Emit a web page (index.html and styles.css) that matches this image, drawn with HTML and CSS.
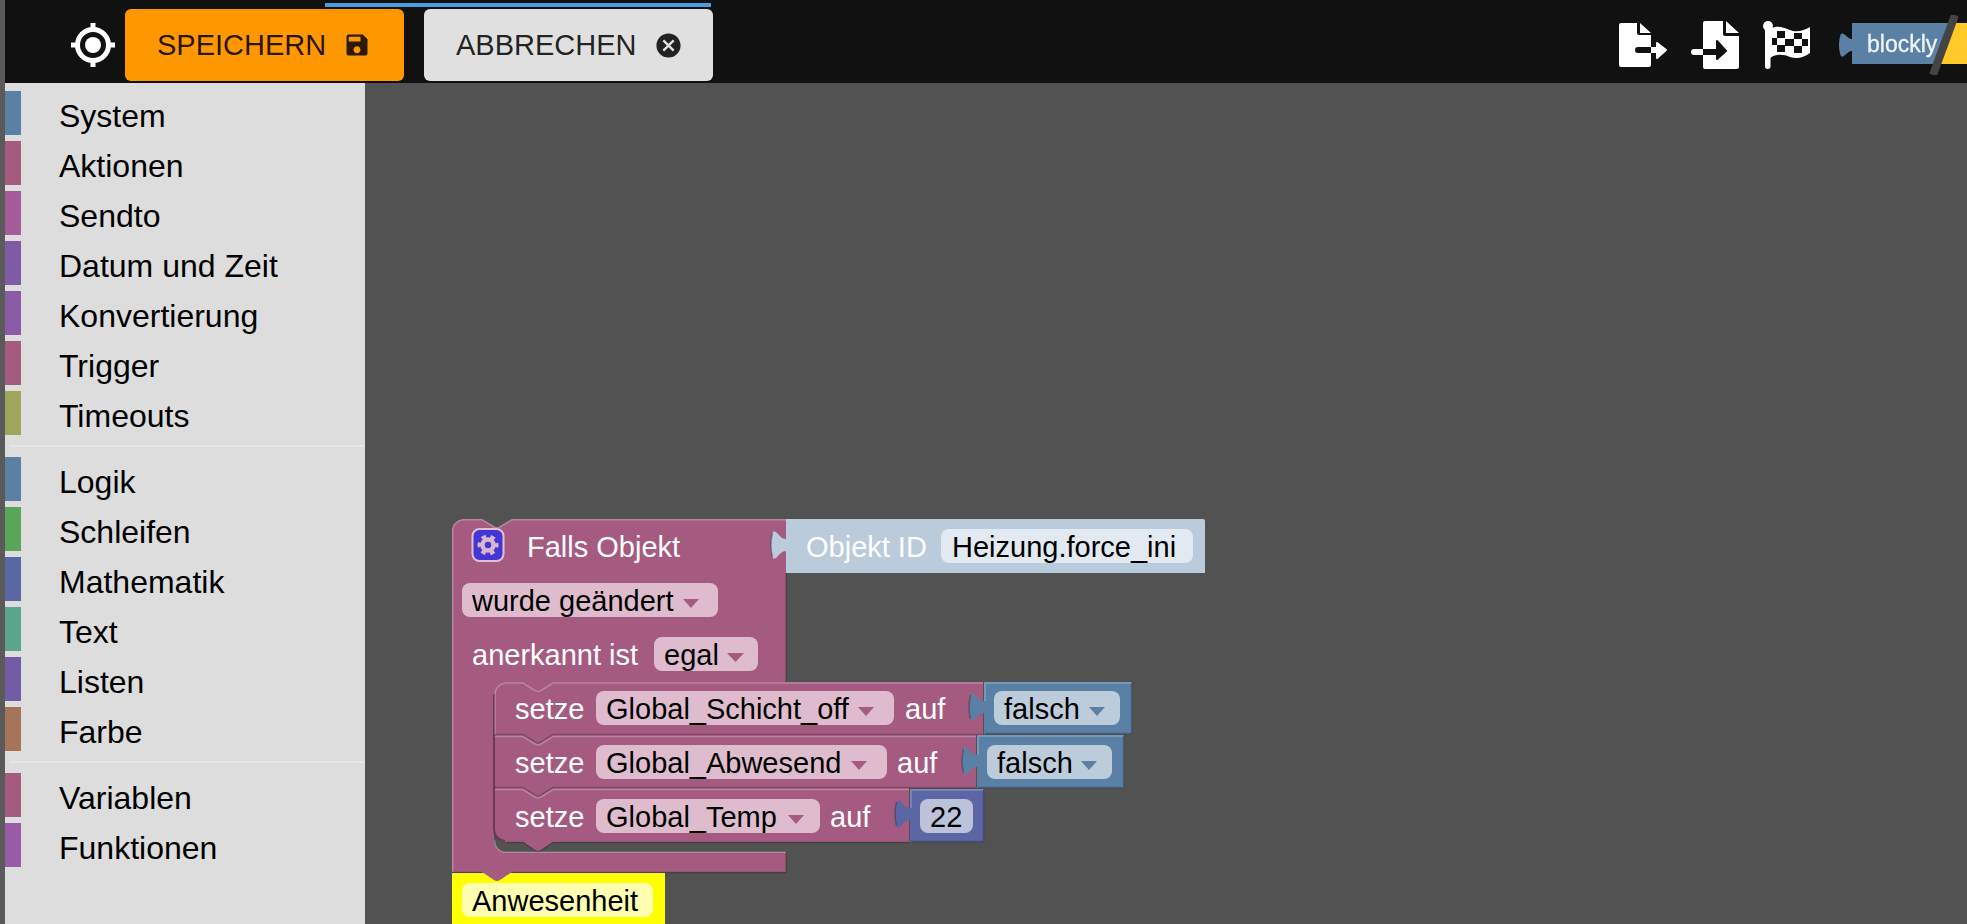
FILE: index.html
```html
<!DOCTYPE html>
<html lang="de">
<head>
<meta charset="utf-8">
<title>Blockly</title>
<link rel="stylesheet" href="styles.css">
</head>
<body>
<div class="app">
  <header class="topbar">
    <div class="progress"></div>
    <svg class="target" width="44" height="44" viewBox="0 0 44 44">
      <circle cx="22" cy="22" r="15.5" fill="none" stroke="#fff" stroke-width="5"/>
      <circle cx="22" cy="22" r="8" fill="#fff"/>
      <rect x="19.5" y="0" width="5" height="8" fill="#fff"/>
      <rect x="19.5" y="36" width="5" height="8" fill="#fff"/>
      <rect x="0" y="19.5" width="8" height="5" fill="#fff"/>
      <rect x="36" y="19.5" width="8" height="5" fill="#fff"/>
    </svg>
    <button class="btn btn-save">SPEICHERN
      <svg width="28" height="28" viewBox="0 0 24 24"><path fill="#2b1a00" d="M17 3H5c-1.11 0-2 .9-2 2v14c0 1.1.89 2 2 2h14c1.1 0 2-.9 2-2V7l-4-4zm-5 16c-1.66 0-3-1.34-3-3s1.34-3 3-3 3 1.34 3 3-1.34 3-3 3zm3-10H5V5h10v4z"/></svg>
    </button>
    <button class="btn btn-cancel">ABBRECHEN
      <svg width="29" height="29" viewBox="0 0 24 24"><path fill="#222" d="M12 2C6.47 2 2 6.47 2 12s4.47 10 10 10 10-4.47 10-10S17.53 2 12 2zm5 13.59L15.59 17 12 13.41 8.41 17 7 15.59 10.59 12 7 8.41 8.41 7 12 10.59 15.59 7 17 8.41 13.41 12 17 15.59z"/></svg>
    </button>
    <div class="tools">
      <svg width="48" height="44" viewBox="0 0 48 44">
        <path fill="#fff" d="M2 0H18V10a2 2 0 0 0 2 2H32V42a2 2 0 0 1-2 2H2a2 2 0 0 1-2-2V2a2 2 0 0 1 2-2Z"/>
        <path fill="#fff" d="M21 0L32 10H21Z"/>
        <rect x="16" y="24" width="20" height="6" rx="3" fill="#111"/>
        <rect x="32" y="24" width="10" height="6" fill="#fff"/>
        <path fill="#fff" stroke="#fff" stroke-width="2" stroke-linejoin="round" d="M38 20L47 27L38 35Z"/>
      </svg>
      <svg width="48" height="48" viewBox="0 0 48 48">
        <path fill="#fff" d="M14 0H32V13a2 2 0 0 0 2 2H48V46a2 2 0 0 1-2 2H14a2 2 0 0 1-2-2V2a2 2 0 0 1 2-2Z"/>
        <path fill="#fff" d="M35 0L48 12H35Z"/>
        <rect x="0" y="28" width="14" height="6" rx="3" fill="#fff"/>
        <rect x="12" y="28" width="16" height="6" fill="#111"/>
        <path fill="#111" stroke="#111" stroke-width="2" stroke-linejoin="round" d="M26 20L35 30L26 38Z"/>
      </svg>
      <svg width="48" height="50" viewBox="0 0 48 50">
        <circle cx="5" cy="6" r="5" fill="#fff"/>
        <rect x="2" y="6" width="5.5" height="43" rx="2.7" fill="#fff"/>
        <path fill="#fff" d="M7 9C16 4 22 9 30 11C36 12 42 10 47 7V33C40 38 34 39 27 37C20 34 13 34 7 38Z"/>
        <g class="checks">
          <rect x="14" y="11" width="8" height="7"/>
          <rect x="31" y="13" width="8" height="6"/>
          <rect x="9" y="18" width="5" height="7"/>
          <rect x="22" y="19" width="9" height="7"/>
          <rect x="39" y="19" width="6" height="7"/>
          <rect x="14" y="25" width="8" height="7"/>
          <rect x="31" y="26" width="8" height="7"/>
        </g>
      </svg>
      <svg class="logo" width="130" height="60" viewBox="0 0 130 60">
        <path fill="#5b80a5" d="M15 8H112L98 49H15V36c-3 0 -4 2 -7 4c-2 2 -4 2 -4.500 0c-2 -6 -2 -14 0 -20c.5 -2 2.500 -2 4.500 0c3 2 4 4 7 4Z"/>
        <path fill="#ffca28" d="M116 8H130V49H102Z"/>
        <path stroke="#444" stroke-width="8" d="M118 0L96 60"/>
        <text class="logo-text" x="30" y="37">blockly</text>
      </svg>
    </div>
  </header>
  <main class="main">
    <nav class="sidebar">
      <div class="cat"><span class="sw c-blue"></span><span class="label">System</span></div>
      <div class="cat"><span class="sw c-rose"></span><span class="label">Aktionen</span></div>
      <div class="cat"><span class="sw c-magenta"></span><span class="label">Sendto</span></div>
      <div class="cat"><span class="sw c-violet"></span><span class="label">Datum und Zeit</span></div>
      <div class="cat"><span class="sw c-purple"></span><span class="label">Konvertierung</span></div>
      <div class="cat"><span class="sw c-rose"></span><span class="label">Trigger</span></div>
      <div class="cat"><span class="sw c-olive"></span><span class="label">Timeouts</span></div>
      <div class="sep"></div>
      <div class="cat"><span class="sw c-blue"></span><span class="label">Logik</span></div>
      <div class="cat"><span class="sw c-green"></span><span class="label">Schleifen</span></div>
      <div class="cat"><span class="sw c-indigo"></span><span class="label">Mathematik</span></div>
      <div class="cat"><span class="sw c-teal"></span><span class="label">Text</span></div>
      <div class="cat"><span class="sw c-listen"></span><span class="label">Listen</span></div>
      <div class="cat"><span class="sw c-brown"></span><span class="label">Farbe</span></div>
      <div class="sep"></div>
      <div class="cat"><span class="sw c-rose"></span><span class="label">Variablen</span></div>
      <div class="cat"><span class="sw c-func"></span><span class="label">Funktionen</span></div>
    </nav>
    <div class="canvas">
      <svg class="blocks" viewBox="365 83 1602 841" width="1602" height="841">
        <!-- yellow block -->
        <rect class="yellow" x="452" y="873" width="213" height="60"/>
        <path class="hl" d="M452 873.5H665"/>
        <rect class="f-yellow" x="462" y="883" width="191" height="34" rx="8"/>
        <text class="tb" x="472" y="911">Anwesenheit</text>

        <!-- main C block -->
        <path class="pink" d="M452 531a12 12 0 0 1 12-12H482L494 526Q497 528 500 526L512 519H786V682H506a12 12 0 0 0-12 12V840a12 12 0 0 0 12 12H786V872H512L500 880Q497 882 494 880L482 872H452Z"/>
        <path class="hl" d="M452.7 872V531a11.3 11.3 0 0 1 11.3-11.3H482L494 527Q497 529 500 527L512 519.7H786"/>
        <path class="sh2" d="M786 573V682M786 852V872.5H512M482 872.5H452"/>
        <path class="hl" d="M494.7 840a11.3 11.3 0 0 0 11.3 12.3H786"/>

        <!-- Objekt ID value -->
        <path class="objid" d="M786 519H1203Q1205 519 1205 521V573H786V551c-4 0 -6 3 -9 6c-2 2 -4 2 -4.500 0c-2 -8 -2 -16 0 -24c.5 -2 2.500 -2 4.500 0c3 3 5 6 9 6Z"/>
        <path class="sh" d="M772.500 557c-2 -8 -2 -16 0 -24"/>
        <text class="tw" x="806" y="557">Objekt ID</text>
        <rect class="f-obj" x="941" y="529" width="252" height="34" rx="8"/>
        <text class="tb" x="952" y="557">Heizung.force_ini</text>

        <!-- inner rows -->
        <path class="pink" d="M494 694a12 12 0 0 1 12-12H983V735H494Z"/>
        <path class="pink" d="M494 735H976V788H494Z"/>
        <path class="pink" d="M494 788H909V842H553L541 850Q538 852 535 850L523 842H506a12 12 0 0 1-12-12Z"/>
        <path class="sh3" d="M494 694V830a12 12 0 0 0 11 11"/>
        <path class="hl" d="M495 735V694a11 11 0 0 1 11-11H523L535 690.500Q538 692.500 541 690.500L553 683H983"/>
        <path class="sh2" d="M494 734.500H523L535 742Q538 744 541 742L553 734.500H983"/>
        <path class="hl" d="M495 736.500H523L535 744Q538 746 541 744L553 736.500H976"/>
        <path class="sh2" d="M494 787.500H523L535 795Q538 797 541 795L553 787.500H976"/>
        <path class="hl" d="M495 789.500H523L535 797Q538 799 541 797L553 789.500H909"/>
        <path class="sh2" d="M506 842.500H523L535 850.500Q538 852.500 541 850.500L553 842.500H909"/>

        <!-- Falls Objekt head -->
        <rect class="icon-box" x="472.500" y="529" width="31" height="32" rx="7"/>
        <circle class="gear-ring" cx="488" cy="545" r="5.500"/>
        <circle class="gear-teeth" cx="488" cy="545" r="8.500"/>
        <text class="tw" x="527" y="557">Falls Objekt</text>

        <rect class="f-pink" x="462" y="583" width="256" height="34" rx="8"/>
        <text class="tb" x="472" y="611">wurde geändert</text>
        <path class="a-pink" d="M683 599H699L691 608Z"/>

        <text class="tw" x="472" y="665">anerkannt ist</text>
        <rect class="f-pink" x="654" y="637" width="104" height="34" rx="8"/>
        <text class="tb" x="664" y="665">egal</text>
        <path class="a-pink" d="M727 653H744L735.500 662Z"/>

        <!-- row 1 -->
        <text class="tw" x="515" y="719">setze</text>
        <rect class="f-pink" x="596" y="691" width="298" height="34" rx="8"/>
        <text class="tb" x="606" y="719">Global_Schicht_off</text>
        <path class="a-pink" d="M858 707H874L866 716Z"/>
        <text class="tw" x="905" y="719">auf</text>
        <path class="blue" d="M984 682H1132V734H984V713c-4 0 -6 3 -9 6c-2 2 -4 2 -4.500 0c-2 -8 -2 -16 0 -24c.5 -2 2.500 -2 4.500 0c3 3 5 6 9 6Z"/>
        <path class="hl" d="M985 701V683H1131"/>
        <path class="sh" d="M970.500 719c-2 -8 -2 -16 0 -24M1131.500 683V733.500H985"/>
        <rect class="f-blue" x="994" y="691" width="126" height="34" rx="8"/>
        <text class="tb" x="1004" y="719">falsch</text>
        <path class="a-blue" d="M1089 707H1105L1097 716Z"/>

        <!-- row 2 -->
        <text class="tw" x="515" y="773">setze</text>
        <rect class="f-pink" x="596" y="745" width="291" height="34" rx="8"/>
        <text class="tb" x="606" y="773">Global_Abwesend</text>
        <path class="a-pink" d="M851 761H867L859 770Z"/>
        <text class="tw" x="897" y="773">auf</text>
        <path class="blue" d="M977 735H1124V788H977V767c-4 0 -6 3 -9 6c-2 2 -4 2 -4.500 0c-2 -8 -2 -16 0 -24c.5 -2 2.500 -2 4.500 0c3 3 5 6 9 6Z"/>
        <path class="hl" d="M978 755V736H1123"/>
        <path class="sh" d="M963.500 773c-2 -8 -2 -16 0 -24M1123.500 736V787.500H978"/>
        <rect class="f-blue" x="987" y="745" width="125" height="34" rx="8"/>
        <text class="tb" x="997" y="773">falsch</text>
        <path class="a-blue" d="M1081 761H1097L1089 770Z"/>

        <!-- row 3 -->
        <text class="tw" x="515" y="827">setze</text>
        <rect class="f-pink" x="596" y="799" width="224" height="34" rx="8"/>
        <text class="tb" x="606" y="827">Global_Temp</text>
        <path class="a-pink" d="M788 815H804L796 824Z"/>
        <text class="tw" x="830" y="827">auf</text>
        <path class="indigo" d="M910 789H984V842H910V820c-4 0 -6 3 -9 6c-2 2 -4 2 -4.500 0c-2 -8 -2 -16 0 -24c.5 -2 2.500 -2 4.500 0c3 3 5 6 9 6Z"/>
        <path class="hl" d="M911 808V790H983"/>
        <path class="sh" d="M896.500 826c-2 -8 -2 -16 0 -24M983.500 790V841.500H911"/>
        <rect class="f-indigo" x="920" y="799" width="53" height="34" rx="8"/>
        <text class="tb" x="930" y="827">22</text>
      </svg>
    </div>
  </main>
</div>
</body>
</html>
```

FILE: styles.css
```css
* { box-sizing: border-box; }
html, body { margin: 0; height: 100%; overflow: hidden; }
body { background: #525252; font-family: "Liberation Sans", Arial, sans-serif; }

.app { display: flex; flex-direction: column; height: 924px; padding-left: 5px; background: #5a5a5a; }

.topbar {
  position: relative;
  display: flex;
  align-items: center;
  height: 83px;
  flex: none;
  padding: 9px 0 2px 66px;
  background: #111;
}
.progress { position: absolute; left: 320px; top: 3px; width: 386px; height: 4px; background: #4a9be0; }
.target { flex: none; margin-top: 0; }

.btn {
  display: flex;
  align-items: center;
  gap: 17px;
  height: 72px;
  border: 0;
  border-radius: 6px;
  font: 29px "Liberation Sans", Arial, sans-serif;
  color: rgba(0, 0, 0, .87);
  white-space: nowrap;
}
.btn-save { width: 279px; margin-left: 10px; padding: 0 0 0 32px; background: #ff9800; }
.btn-cancel { width: 289px; margin-left: 20px; padding: 0 0 0 32px; background: #e0e0e0; }

.tools { display: flex; align-items: center; margin-left: auto; gap: 24px; }
.logo { margin-left: 2px; filter: blur(.4px); }
.logo-text { font-size: 23px; fill: #f0f4f8; stroke: #f0f4f8; stroke-width: .3px; }
.checks rect { fill: #111; }

.main { display: flex; flex: 1; min-height: 0; }
.sidebar { flex: none; width: 360px; padding-top: 5px; background: #ddd; }
.cat { display: flex; align-items: center; height: 50px; gap: 38px; }
.sw { flex: none; width: 16px; height: 44px; }
.label { padding-top: 6px; font-size: 32px; color: #000; white-space: nowrap; }
.sep { height: 2px; margin: 7px 0 7px 5px; background: #e6e6e6; }

.c-blue { background: #5b80a5; }
.c-rose { background: #a55b80; }
.c-magenta { background: #a55b99; }
.c-func { background: #995ba5; }
.c-violet { background: #805ba5; }
.c-purple { background: #8b5ba5; }
.c-olive { background: #9fa55b; }
.c-green { background: #5ba55b; }
.c-indigo { background: #5b67a5; }
.c-teal { background: #5ba58c; }
.c-listen { background: #745ba5; }
.c-brown { background: #a5745b; }

.canvas { flex: 1; min-width: 0; background: #525252; }
.blocks { display: block; }
.blocks text { font-size: 29px; font-family: "Liberation Sans", Arial, sans-serif; white-space: pre; }
.tw { fill: #fff; }
.tb { fill: #000; }

.pink { fill: #a55b80; }
.blue { fill: #5b80a5; }
.indigo { fill: #5b67a5; }
.objid { fill: #bacbdc; }
.yellow { fill: #ff0; }
.f-pink { fill: #dfbccd; }
.f-blue { fill: #bdccdb; }
.f-indigo { fill: #bdc2db; }
.f-obj { fill: #e3e9f1; }
.f-yellow { fill: #ffffb2; }
.a-pink { fill: #a55b80; }
.a-blue { fill: #5b80a5; }

.hl { fill: none; stroke: rgba(255, 255, 255, .25); stroke-width: 1.5; }
.sh { fill: none; stroke: rgba(0, 0, 0, .25); stroke-width: 1.5; }
.sh2 { fill: none; stroke: rgba(0, 0, 0, .22); stroke-width: 1.5; }
.sh3 { fill: none; stroke: rgba(0, 0, 0, .35); stroke-width: 2; }

.icon-box { fill: #4335d6; stroke: #e3bfd2; stroke-width: 2; }
.gear-ring { fill: none; stroke: #d9b6cb; stroke-width: 4.5; }
.gear-teeth { fill: none; stroke: #d9b6cb; stroke-width: 4; stroke-dasharray: 4.45 4.45; stroke-dashoffset: 2.2; }
```
